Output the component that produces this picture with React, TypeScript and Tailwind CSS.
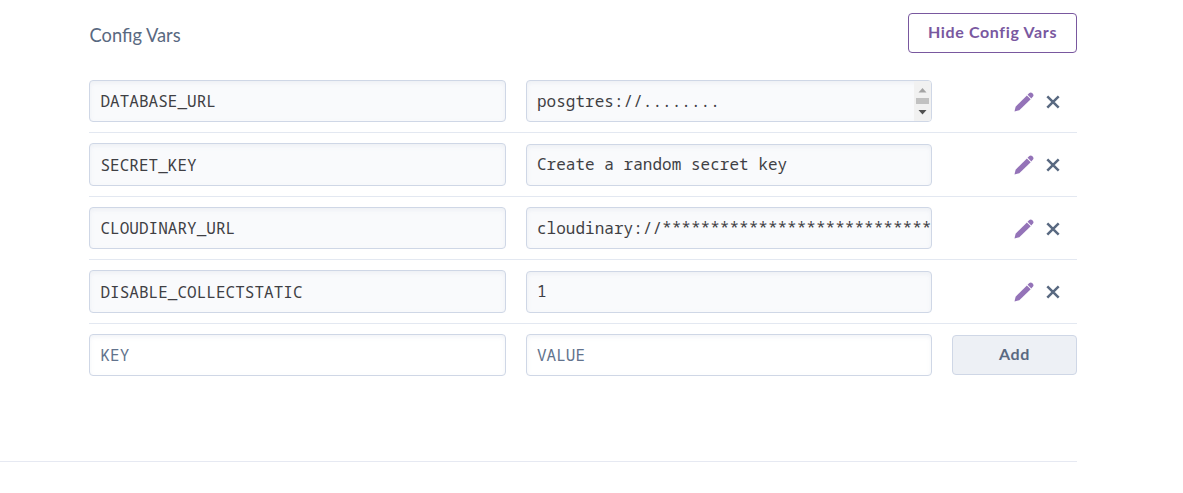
import React from "react";

const MONO =
  "font-['Noto_Sans_Mono','DejaVu_Sans_Mono',monospace] text-[16px] tracking-[0.02px]";
const FIELD =
  "border border-[#cfd7e6] rounded-[4px] shadow-[inset_0_2px_4px_0_rgba(207,215,230,0.3)] overflow-hidden whitespace-nowrap flex items-center";

function Pencil() {
  return (
    <svg width="20" height="20" viewBox="0 0 20 20" fill="#9473b8">
      <path d="M0.5 19.4 L1.6 14.7 L12.9 3.4 L16.7 7.2 L5.3 18.2 Z" />
      <path d="M13.6 2.7 L15.3 1 Q16.8 -0.2 18.2 1.1 L18.8 1.7 Q20.1 3.1 19 4.6 L17.3 6.4 Z" />
    </svg>
  );
}

function Cross() {
  return (
    <svg width="14" height="14" viewBox="0 0 14 14" fill="none" stroke="#596981" strokeWidth="2.5">
      <path d="M1.3 1.3 L12.7 12.7 M12.7 1.3 L1.3 12.7" />
    </svg>
  );
}

function Scrollbar() {
  return (
    <div className="ml-auto flex h-[40px] w-[17px] shrink-0 flex-col items-center bg-[#f1f1f1]">
      <svg width="17" height="40" viewBox="0 0 17 40">
        <path d="M4.5 11.5 L8.5 7 L12.5 11.5 Z" fill="#a3a3a3" />
        <rect x="2" y="17" width="13" height="6" fill="#c1c1c1" />
        <path d="M4.5 29 L8.5 33.5 L12.5 29 Z" fill="#505050" />
      </svg>
    </div>
  );
}

const vars = [
  { key: "DATABASE_URL", value: "posgtres://........", scroll: true },
  { key: "SECRET_KEY", value: "Create a random secret key" },
  { key: "CLOUDINARY_URL", value: "cloudinary://****************************" },
  { key: "DISABLE_COLLECTSTATIC", value: "1" },
];

export default function App() {
  return (
    <div className="h-[493px] w-full overflow-hidden bg-white">
      <div className="h-[462px] w-[1077px] border-b border-[#e6e9f2] pl-[89px] pt-[13px]">
        <header className="flex h-[40px] items-center justify-between font-['Lato',sans-serif]">
          <h2 className="pl-[0.5px] pt-[5px] text-[18.3px] text-[#596981]">Config Vars</h2>
          <button className="h-[40px] w-[169px] rounded-[4px] border border-[#79589f] pb-[2px] text-[16px] font-bold tracking-[0.65px] text-[#79589f]">
            Hide Config Vars
          </button>
        </header>
        <div className="pt-[16.5px]">
          {vars.map((v) => (
            <div key={v.key} className="flex h-[63.5px] gap-5 border-b border-[#e3e8f1] pt-[10.5px]">
              <div className={`${FIELD} ${MONO} -mt-[0.5px] h-[42.5px] w-[417px] bg-[#f9fafc] pl-[10.5px] pt-[0.6px] text-[#3f3f44]`}>{v.key}</div>
              <div className={`${FIELD} ${MONO} h-[42px] w-[406px] bg-[#f9fafc] pl-[10px] text-[#3f3f44]`}>
                <span className="pb-[0.6px]">{v.value}</span>
                {v.scroll && <Scrollbar />}
              </div>
              <div className="mt-[0.5px] flex h-[42px] flex-1 items-center justify-end gap-3 pr-[17px]">
                <Pencil />
                <Cross />
              </div>
            </div>
          ))}
          <div className="flex h-[63.5px] gap-5 pt-[10.5px]">
            <div className={`${FIELD} ${MONO} h-[42px] w-[417px] pl-[10.5px] text-[#62738d]`}>KEY</div>
            <div className={`${FIELD} ${MONO} h-[42px] w-[406px] pl-[10px] text-[#62738d]`}>VALUE</div>
            <button className="mt-px h-[40px] flex-1 rounded-[4px] border border-[#cfd7e6] bg-[#edf0f5] pb-[2px] font-['Lato',sans-serif] text-[16px] font-bold tracking-[0.65px] text-[#596981]">
              Add
            </button>
          </div>
        </div>
      </div>
    </div>
  );
}
